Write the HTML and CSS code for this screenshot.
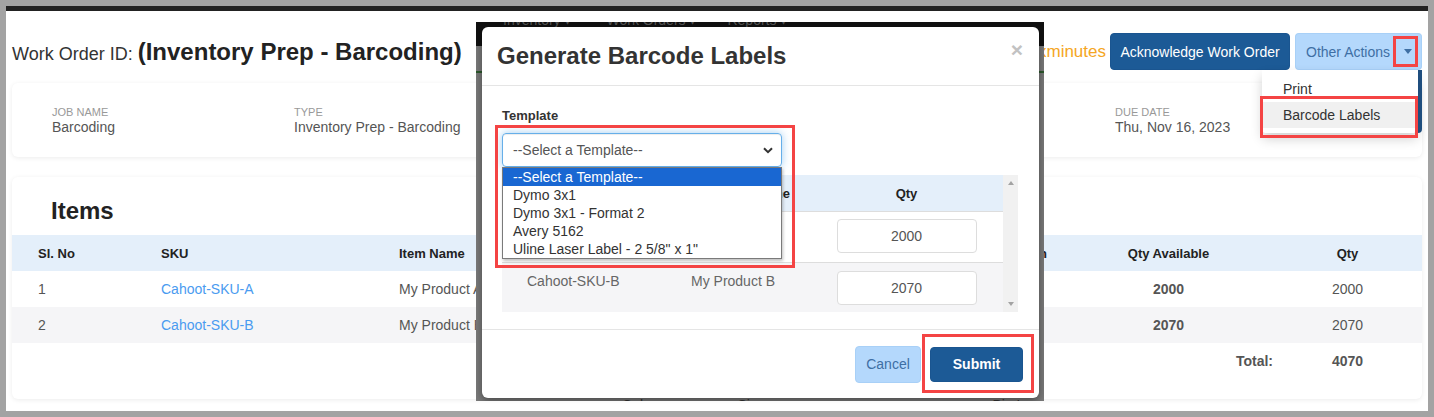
FILE: index.html
```html
<!DOCTYPE html>
<html>
<head>
<meta charset="utf-8">
<title>Work Order</title>
<link rel="stylesheet" href="styles.css">
</head>
<body>
<div class="screen">
  <div class="page">
    <div class="topbar">
      <h1 class="wo-title"><span class="wo-label">Work Order ID:</span> <b>(Inventory Prep - Barcoding)</b></h1>
      <div class="actions">
        <span class="eta">Estimated time: xminutes</span>
        <button class="btn btn-primary btn-ack">Acknowledge Work Order</button>
        <div class="split">
          <button class="btn btn-light split-main">Other Actions</button>
          <button class="btn btn-light split-caret"><span class="caret"></span></button>
          <span class="hl hl-caret"></span>
          <div class="menu">
            <div class="menu-item">Print</div>
            <div class="menu-item active">Barcode Labels</div>
          </div>
          <span class="hl hl-menu"></span>
        </div>
      </div>
    </div>

    <div class="card info">
      <div class="field"><div class="lbl">JOB NAME</div><div class="val">Barcoding</div></div>
      <div class="field"><div class="lbl">TYPE</div><div class="val">Inventory Prep - Barcoding</div></div>
      <div class="field"><div class="lbl">STATUS</div><div class="val">Open</div></div>
      <div class="field"><div class="lbl">DUE DATE</div><div class="val">Thu, Nov 16, 2023</div></div>
    </div>

    <div class="card items">
      <h2 class="items-title">Items</h2>
      <table class="items-table">
        <colgroup>
          <col class="c1"><col class="c2"><col class="c3"><col class="c4"><col class="c5"><col class="c6"><col class="c7">
        </colgroup>
        <thead>
          <tr><th>Sl. No</th><th>SKU</th><th>Item Name</th><th>Description</th><th class="r">Bin Location</th><th class="c">Qty Available</th><th class="c">Qty</th></tr>
        </thead>
        <tbody>
          <tr><td>1</td><td><a class="sku">Cahoot-SKU-A</a></td><td>My Product A</td><td></td><td></td><td class="c b">2000</td><td class="c">2000</td></tr>
          <tr class="alt"><td>2</td><td><a class="sku">Cahoot-SKU-B</a></td><td>My Product B</td><td></td><td></td><td class="c b">2070</td><td class="c">2070</td></tr>
          <tr class="total"><td></td><td></td><td></td><td></td><td></td><td class="r b">Total:</td><td class="c b">4070</td></tr>
        </tbody>
      </table>
    </div>
  </div>

  <div class="overlay">
    <div class="dimnav"><span>Inventory ▾</span><span>Work Orders ▾</span><span>Reports ▾</span></div>
    <div class="dimline"></div>
    <div class="dimfoot"><span class="d1">Color</span><span class="d2">Size</span><span class="d3">e</span><span class="d4">Bin Location</span></div>

    <div class="modal">
      <div class="modal-header">
        <h4 class="modal-title">Generate Barcode Labels</h4>
        <span class="close">×</span>
      </div>
      <div class="modal-body">
        <div class="form-label">Template</div>
        <div class="select">
          <span>--Select a Template--</span>
          <svg class="chev" width="10" height="7" viewBox="0 0 10 7"><path d="M1 1.2 L5 5.2 L9 1.2" fill="none" stroke="#333" stroke-width="2"/></svg>
        </div>
        <div class="grid-wrap">
          <div class="grid">
            <div class="grow ghead"><div class="g1"></div><div class="g2 r">Item Name</div><div class="g3 c">Qty</div></div>
            <div class="grow"><div class="g1"></div><div class="g2"></div><div class="g3"><div class="qty">2000</div></div></div>
            <div class="grow alt"><div class="g1">Cahoot-SKU-B</div><div class="g2">My Product B</div><div class="g3"><div class="qty">2070</div></div></div>
          </div>
          <div class="vscroll"><span class="arr up"></span><span class="arr down"></span></div>
        </div>
      </div>
      <div class="modal-footer">
        <button class="btn btn-light btn-cancel">Cancel</button>
        <button class="btn btn-primary btn-submit">Submit</button>
      </div>

      <div class="listbox">
        <div class="opt sel">--Select a Template--</div>
        <div class="opt">Dymo 3x1</div>
        <div class="opt">Dymo 3x1 - Format 2</div>
        <div class="opt">Avery 5162</div>
        <div class="opt">Uline Laser Label - 2 5/8" x 1"</div>
      </div>
      <span class="hl hl-select"></span>
      <span class="hl hl-submit"></span>
    </div>
  </div>
</div>
</body>
</html>
```

FILE: styles.css
```css
* { box-sizing: border-box; }
html, body { margin: 0; padding: 0; }
body {
  background: #a3a3a3;
  font-family: "Liberation Sans", Arial, Helvetica, sans-serif;
  color: #333;
  height: 417px;
  overflow: hidden;
}
.screen {
  position: relative;
  margin: 6px 6px 0 6px;
  height: 405px;
  background: #fff;
  border-top: 5px solid #222;
  overflow: hidden;
}
.page { padding: 0 6px; }

/* top bar */
.topbar {
  display: flex;
  align-items: center;
  justify-content: space-between;
  height: 37px;
  margin-top: 22px;
}
.wo-title { margin: 0; font-size: 18px; font-weight: normal; color: #333; white-space: nowrap; }
.wo-title b { font-size: 24px; font-weight: bold; color: #222; }
.actions { display: flex; align-items: center; }
.eta { color: #f5a623; font-size: 17px; margin-right: 4px; white-space: nowrap; }
.btn {
  font-family: "Liberation Sans", Arial, sans-serif;
  font-size: 14px;
  border-radius: 4px;
  border: 1px solid transparent;
  height: 37px;
  padding: 0 10px;
  white-space: nowrap;
  cursor: pointer;
}
.btn-primary { background: #1c5a96; color: #fff; border-color: #1a5590; }
.btn-light { background: #b4d8fc; color: #3e6fa4; border-color: #a8d0f7; }
.btn-ack { width: 180px; padding: 0; }
.split { position: relative; display: flex; margin-left: 5px; }
.split-main { width: 98px; padding: 0 2px 0 10px; text-align: left; border-radius: 4px 0 0 4px; border-right: none; }
.split-caret { width: 29px; padding: 0; border-radius: 0 4px 4px 0; border-left: none; display: flex; align-items: center; justify-content: center; }
.caret {
  display: block;
  width: 0; height: 0;
  border-top: 5px solid #3e6fa4;
  border-left: 4.5px solid transparent;
  border-right: 4.5px solid transparent;
  margin-left: 1px;
}
.menu {
  position: absolute;
  top: 37px;
  right: 4px;
  width: 156px;
  padding: 6px 0 5px;
  background: #fff;
  border-radius: 0 0 4px 4px;
  box-shadow: 4px 0 0 #1f4e7e, 0 6px 12px rgba(0,0,0,.18);
  z-index: 2;
}
.menu-item { height: 26px; line-height: 26px; padding-left: 21px; font-size: 14px; color: #333; }
.menu-item.active { background: #f0f0f0; }

/* highlight boxes */
.hl { position: absolute; border: 3px solid #f44444; z-index: 5; pointer-events: none; }
.hl-caret { left: 98px; top: 3px; width: 25px; height: 31px; }
.hl-menu { left: -35px; top: 63px; width: 158px; height: 42px; }
.hl-select { left: 13px; top: 98px; width: 300px; height: 143px; }
.hl-submit { left: 440px; top: 307px; width: 112px; height: 59px; }

/* cards */
.card {
  background: #fff;
  border-radius: 6px;
  box-shadow: 0 1px 5px rgba(0,0,0,.08);
}
.info {
  margin-top: 13px;
  height: 74px;
  display: grid;
  grid-template-columns: 242px 242px 579px 1fr;
  padding: 23px 0 0 40px;
}
.lbl { font-size: 11px; line-height: 13px; color: #999; }
.val { font-size: 14px; line-height: 17px; color: #555; }

.items { margin-top: 20px; height: 222px; padding-top: 20px; }
.items-title { margin: 0 0 10px; padding-left: 39px; font-size: 24px; line-height: 28px; font-weight: bold; color: #222; }
.items-table { width: 100%; border-collapse: collapse; table-layout: fixed; }
.c1 { width: 123px; } .c2 { width: 238px; } .c3 { width: 247px; } .c4 { width: 260px; }
.c5 { width: 184px; } .c6 { width: 209px; } .c7 { width: 149px; }
.items-table th {
  background: #e4effa;
  height: 36px;
  font-size: 13px;
  font-weight: bold;
  color: #222;
  text-align: left;
  padding: 0 0 0 26px;
  white-space: nowrap;
  overflow: hidden;
}
.items-table td {
  height: 36px;
  font-size: 14px;
  color: #555;
  padding: 0 0 0 26px;
  white-space: nowrap;
  overflow: hidden;
}
.items-table .c { text-align: center; padding: 0; }
.items-table th.r { text-align: right; padding: 0 17px 0 0; }
.items-table td.r { text-align: right; padding: 0; }
.items-table .b { font-weight: bold; }
.items-table tr.alt td { background: #f5f5f7; }
.sku { color: #4a9bf0; text-decoration: none; }

/* overlay */
.overlay {
  position: absolute;
  left: 470px;
  top: 11px;
  width: 568px;
  height: 379px;
  background: #7a7a7a;
  overflow: hidden;
  z-index: 10;
}
.dimnav {
  height: 24px;
  background: #111;
  display: flex;
  overflow: hidden;
  padding-left: 27px;
  gap: 31px;
}
.dimnav span { margin-top: -10px; line-height: 16px; font-size: 14px; color: #555; white-space: nowrap; }
.dimnav span:nth-child(2) { margin-left: 4px; }
.dimline { margin-top: 25px; height: 2px; background: #2c5a2c; }
.dimfoot {
  position: absolute;
  left: 0; right: 0; bottom: -12px;
  height: 16px;
  display: flex;
  font-size: 14px;
  color: #333;
}
.dimfoot span { white-space: nowrap; }
.d1 { margin-left: 146px; } .d2 { margin-left: 82px; } .d3 { margin-left: 52px; } .d4 { margin-left: 168px; }

.modal {
  position: absolute;
  left: 6px;
  top: 5px;
  width: 557px;
  height: 371px;
  background: #fff;
  border-radius: 6px;
  box-shadow: 0 3px 9px rgba(0,0,0,.4);
}
.modal-header {
  height: 59px;
  border-bottom: 1px solid #e5e5e5;
  display: flex;
  align-items: center;
  justify-content: space-between;
  padding: 0 16px 0 15px;
}
.modal-title { margin: 0; font-size: 24px; line-height: 28px; font-weight: bold; color: #333; }
.close { align-self: flex-start; margin-top: 11px; font-size: 21px; font-weight: bold; color: #c2c2c2; line-height: 24px; }
.modal-body { padding: 22px 21px 17px 20px; }
.form-label { font-size: 13px; font-weight: bold; line-height: 16px; color: #333; }
.select {
  margin-top: 9px;
  width: 280px;
  height: 34px;
  border: 1px solid #66afe9;
  border-radius: 4px;
  box-shadow: inset 0 1px 1px rgba(0,0,0,.075), 0 0 8px rgba(102,175,233,.6);
  display: flex;
  align-items: center;
  justify-content: space-between;
  padding: 0 8px 0 10px;
  font-size: 14px;
  color: #555;
}
.chev { display: block; }
.grid-wrap { margin-top: 8px; display: flex; width: 516px; height: 137px; }
.grid { width: 501px; }
.grow { display: flex; height: 51px; border-top: 1px solid #ddd; }
.grow.ghead { height: 36px; border-top: none; background: #e4effa; align-items: center; font-size: 13px; font-weight: bold; color: #222; }
.grow.alt { background: #f5f5f7; height: 50px; }
.g1 { width: 163px; padding-left: 25px; }
.g2 { width: 145px; padding-left: 26px; }
.g3 { width: 193px; }
.ghead .r { text-align: right; padding: 0 20px 0 0; }
.ghead .c { text-align: center; }
.grow:not(.ghead) { font-size: 14px; color: #666; }
.grow:not(.ghead) .g1, .grow:not(.ghead) .g2 { padding-top: 10px; line-height: 17px; }
.grow:not(.ghead) .g3 { display: flex; justify-content: center; padding-top: 7px; }
.grow.alt .g3 { padding-top: 8px; }
.qty {
  width: 140px;
  height: 34px;
  border: 1px solid #ddd;
  border-radius: 4px;
  background: #fff;
  display: flex;
  align-items: center;
  justify-content: center;
  font-size: 14px;
  color: #555;
}
.vscroll {
  width: 15px;
  background: #f1f1f1;
  display: flex;
  flex-direction: column;
  justify-content: space-between;
  align-items: center;
  padding: 6px 0 6px;
}
.arr { display: block; width: 0; height: 0; border-left: 3.5px solid transparent; border-right: 3.5px solid transparent; }
.arr.up { border-bottom: 4px solid #a3a3a3; }
.arr.down { border-top: 4px solid #a3a3a3; }

.modal-footer {
  border-top: 1px solid #e5e5e5;
  height: 69px;
  display: flex;
  justify-content: flex-end;
  align-items: center;
  gap: 9px;
  padding: 0 16px 0 0;
}
.btn-cancel { width: 66px; height: 37px; padding: 0; }
.btn-submit { width: 93px; height: 35px; padding: 0; font-weight: bold; }

.listbox {
  position: absolute;
  left: 20px;
  top: 140px;
  width: 280px;
  border: 1px solid #7a7a7a;
  background: #fff;
  box-shadow: 1px 2px 3px rgba(0,0,0,.25);
  z-index: 3;
}
.opt { height: 18px; line-height: 18px; padding-left: 10px; font-size: 14px; color: #333; white-space: nowrap; }
.opt.sel { background: #1967d2; color: #fff; }
```
